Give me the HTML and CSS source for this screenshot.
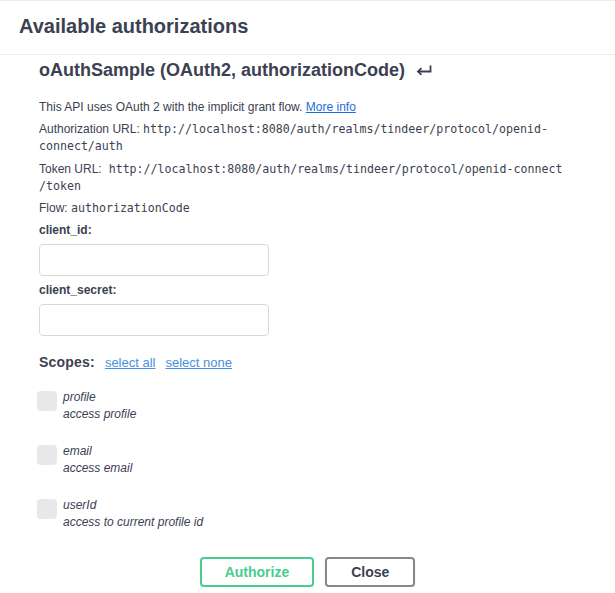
FILE: index.html
```html
<!DOCTYPE html>
<html lang="en">
<head>
<meta charset="utf-8">
<title>Available authorizations</title>
<link rel="stylesheet" href="styles.css">
</head>
<body>
<div class="modal">
  <div class="modal-header">
    <h3 class="modal-title">Available authorizations</h3>
  </div>
  <div class="auth">
    <h4 class="auth-name">oAuthSample (OAuth2, authorizationCode)
      <svg class="jump" width="16" height="11" viewBox="0 0 16 11" aria-hidden="true"><path d="M14.5 1.5V7.5H2.5" fill="none" stroke="#3b4151" stroke-width="1.8"/><path d="M5.5 4.2L2 7.5L5.5 10.8" fill="none" stroke="#3b4151" stroke-width="1.8"/></svg>
    </h4>
    <p class="line line-desc">This API uses OAuth 2 with the implicit grant flow. <a class="info-link" href="#">More info</a></p>
    <p class="line line-auth">Authorization URL: <code>http://localhost:8080/auth/realms/tindeer/protocol/openid-connect/auth</code></p>
    <p class="line line-token">Token URL:<code> http://localhost:8080/auth/realms/tindeer/protocol/openid-connect<wbr>/token</code></p>
    <p class="line line-flow">Flow: <code>authorizationCode</code></p>
    <label class="field-label">client_id:</label>
    <input class="field" type="text">
    <label class="field-label field-label-second">client_secret:</label>
    <input class="field" type="password">
    <div class="scopes-head">
      <span class="scopes-title">Scopes:</span>
      <a class="scope-link" href="#">select all</a>
      <a class="scope-link" href="#">select none</a>
    </div>
    <div class="scope">
      <span class="check"></span>
      <div class="scope-text"><div>profile</div><div>access profile</div></div>
    </div>
    <div class="scope">
      <span class="check"></span>
      <div class="scope-text"><div>email</div><div>access email</div></div>
    </div>
    <div class="scope">
      <span class="check"></span>
      <div class="scope-text"><div>userId</div><div>access to current profile id</div></div>
    </div>
  </div>
  <div class="buttons">
    <button class="btn btn-auth">Authorize</button>
    <button class="btn btn-close">Close</button>
  </div>
</div>
</body>
</html>
```
FILE: styles.css
```css
html, body {
  margin: 0;
  padding: 0;
  background: #fff;
}
body {
  font-family: "Liberation Sans", Arial, sans-serif;
  color: #3b4151;
}
.modal {
  width: 615px;
}
.modal-header {
  border-top: 1px solid #ebebeb;
  border-bottom: 1px solid #ebebeb;
  padding: 14px 19px 16px;
}
.modal-title {
  margin: 0;
  font-size: 20px;
  line-height: 23px;
  font-weight: bold;
  color: #3b4151;
}
.auth {
  padding: 0 39px;
  display: flex;
  flex-direction: column;
  align-items: flex-start;
}
.auth-name {
  margin: 5px 0 0;
  font-size: 18px;
  line-height: 21px;
  font-weight: bold;
  display: flex;
  align-items: center;
}
.jump {
  margin-left: 11px;
  margin-top: -2px;
}
.line {
  margin: 0;
  font-size: 12px;
  line-height: 17px;
  width: 537px;
}
.line-desc {
  margin-top: 18px;
}
.line-auth {
  margin-top: 5px;
}
.line-token {
  margin-top: 6px;
}
.line-flow {
  margin-top: 5px;
}
code {
  font-family: "DejaVu Sans Mono", monospace;
  font-size: 11.6px;
  line-height: 17px;
}
.info-link {
  color: #1b6ddb;
}
.field-label {
  font-size: 12px;
  line-height: 17px;
  font-weight: bold;
  margin-top: 5px;
}
.field-label-second {
  margin-top: 6px;
}
.field {
  box-sizing: border-box;
  width: 230px;
  height: 32px;
  margin: 5px 0 0;
  border: 1px solid #d9d9d9;
  border-radius: 4px;
  background: #fff;
  padding: 0 8px;
}
.scopes-head {
  margin-top: 18px;
  display: flex;
  align-items: baseline;
  line-height: 17px;
}
.scopes-title {
  font-size: 14px;
  font-weight: bold;
  letter-spacing: 0.2px;
  margin-right: 5px;
}
.scope-link {
  font-size: 13px;
  color: #4990e2;
  padding: 0 5px;
}
.scope {
  display: flex;
  align-items: flex-start;
  margin-top: 18px;
}
.scope + .scope {
  margin-top: 20px;
}
.check {
  width: 20px;
  height: 20px;
  border-radius: 4px;
  background: #e8e8e8;
  margin: 2px 6px 0 -2px;
  flex: none;
}
.scope-text {
  font-size: 12px;
  line-height: 17px;
  font-style: italic;
}
.buttons {
  display: flex;
  justify-content: center;
  gap: 11px;
  margin-top: 26px;
}
.btn {
  font-family: "Liberation Sans", Arial, sans-serif;
  font-size: 14px;
  font-weight: bold;
  line-height: 16px;
  padding: 5px 23px;
  border-radius: 4px;
  background: transparent;
  box-shadow: 0 1px 2px rgba(0,0,0,0.1);
}
.btn-auth {
  border: 2px solid #49cc90;
  color: #49cc90;
}
.btn-close {
  border: 2px solid #888;
  color: #3b4151;
  padding: 5px 24px;
}
```
